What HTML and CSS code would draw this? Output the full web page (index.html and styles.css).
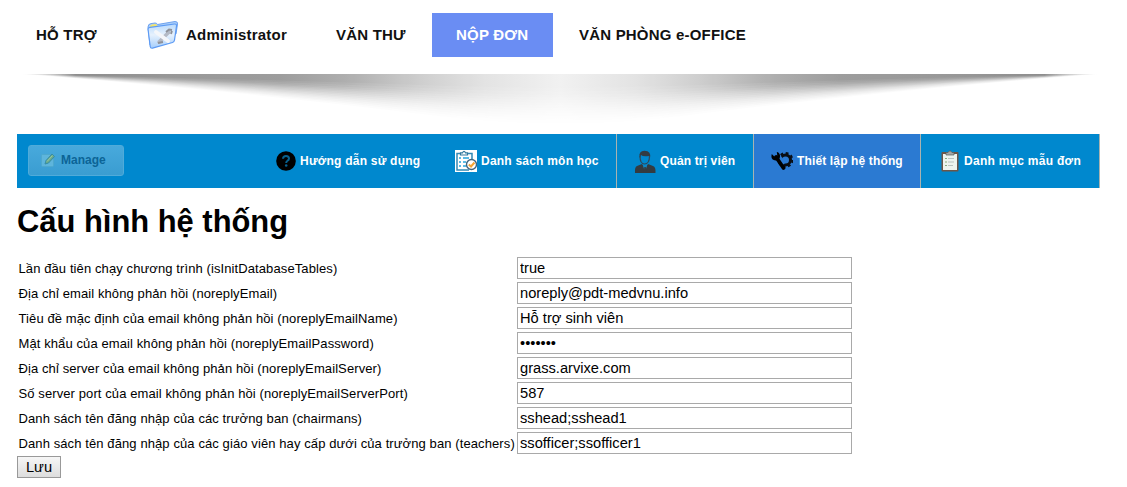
FILE: index.html
```
<!DOCTYPE html>
<html lang="vi">
<head>
<meta charset="utf-8">
<title>Cấu hình hệ thống</title>
<link rel="stylesheet" href="styles.css">
</head>
<body>
<nav class="top-nav">
  <a class="top-link support">HỖ TRỢ</a>
  <a class="top-link admin">
    <svg class="folder" width="34" height="30" viewBox="0 0 34 30">
      <defs><linearGradient id="fold" x1="0" y1="0" x2="0" y2="1"><stop offset="0" stop-color="#b9dafc"/><stop offset=".45" stop-color="#e6f1fd"/><stop offset="1" stop-color="#a4cdfb"/></linearGradient></defs>
      <path d="M2 7Q2 4 5 3.600L9 3Q11 3 11.500 4.500L29 1.500Q32 1.500 31.500 4L30 14L4 25Z" fill="#a9cefa" stroke="#6ea2ee"/>
      <path d="M4 6.500Q4 4.800 6 4.500L10 4L12 6.500L4 8Z" fill="#f2e46b"/>
      <path d="M2 9Q2 7.500 4 7.300L28.500 4Q30.800 3.800 30.500 6L28.500 20Q28.200 22 26.500 22.500L6.500 28.200Q4.500 28.500 4.200 26.500Z" fill="url(#fold)" stroke="#5c9af4" stroke-width="1.200"/>
      <path d="M13 22L23 12" stroke="#b4bac6" stroke-width="3.500" stroke-linecap="round"/>
      <path d="M10 12L22 21" stroke="#f4f6fa" stroke-width="4" stroke-linecap="round"/>
      <path d="M20 12L23 9.500L26 10M26 11L25 14M12 23L17 22" stroke="#8e9199" stroke-width="1.800" fill="none"/>
    </svg>
    <span>Administrator</span>
  </a>
  <a class="top-link mail">VĂN THƯ</a>
  <a class="top-link active">NỘP ĐƠN</a>
  <a class="top-link office">VĂN PHÒNG e-OFFICE</a>
</nav>
<svg class="shadow" width="1127" height="60" viewBox="0 0 1127 60">
  <defs>
    <linearGradient id="shade" gradientUnits="userSpaceOnUse" x1="22" y1="0" x2="1098" y2="0">
      <stop offset="0" stop-color="#aaa" stop-opacity="0"/><stop offset=".05" stop-color="#888"/><stop offset=".13" stop-color="#929292"/><stop offset=".24" stop-color="#999"/><stop offset=".3" stop-color="#aaa"/><stop offset=".37" stop-color="#ccc"/><stop offset=".43" stop-color="#e2e2e2"/><stop offset=".5" stop-color="#f0f0f0"/><stop offset=".57" stop-color="#e2e2e2"/><stop offset=".63" stop-color="#ccc"/><stop offset=".7" stop-color="#aaa"/><stop offset=".76" stop-color="#999"/><stop offset=".87" stop-color="#929292"/><stop offset=".95" stop-color="#888"/><stop offset="1" stop-color="#aaa" stop-opacity="0"/>
    </linearGradient>
    <path id="wedge" d="M22 0L50 .04Q250 .32 440 .74Q560 1 680 .74Q870 .32 1070 .04L1098 0Z"/>
    <mask id="fade" maskUnits="userSpaceOnUse" x="0" y="0" width="1127" height="60" style="mask-type:alpha">
      <use href="#wedge" transform="scale(1 57)" opacity=".04"/>
      <use href="#wedge" transform="scale(1 54)" opacity=".05"/>
      <use href="#wedge" transform="scale(1 51)" opacity=".06"/>
      <use href="#wedge" transform="scale(1 48)" opacity=".07"/>
      <use href="#wedge" transform="scale(1 45)" opacity=".08"/>
      <use href="#wedge" transform="scale(1 42)" opacity=".1"/>
      <use href="#wedge" transform="scale(1 39)" opacity=".12"/>
      <use href="#wedge" transform="scale(1 36)" opacity=".14"/>
      <use href="#wedge" transform="scale(1 33)" opacity=".16"/>
      <use href="#wedge" transform="scale(1 30)" opacity=".2"/>
      <use href="#wedge" transform="scale(1 27)" opacity=".25"/>
      <use href="#wedge" transform="scale(1 24)" opacity=".3"/>
      <use href="#wedge" transform="scale(1 20)" opacity=".4"/>
      <use href="#wedge" transform="scale(1 16)" opacity=".6"/>
    </mask>
  </defs>
  <path d="M22 0H1098V60H22Z" fill="url(#shade)" mask="url(#fade)"/>
</svg>
<div class="toolbar">
  <button class="manage" disabled>
    <svg width="16" height="16" viewBox="0 0 16 16"><rect x="1.500" y="2.500" width="12" height="12" rx="1" fill="#5eb5dc" stroke="#4da8ce"/><path d="M5 12L6 8.500L12 2L14.500 4.500L8.500 11Z" fill="#68a98c" stroke="#358da6"/><path d="M7 9.500L12.500 3.500" stroke="#9bc9a3"/></svg>
    <span>Manage</span>
  </button>
  <a class="tool guide">
    <svg width="20" height="20" viewBox="0 0 20 20"><circle cx="10" cy="10" r="9.800"/><path d="M7 7.700Q7.200 5 10 5Q13 5 13 7.500Q13 9 11.200 10Q10.200 10.600 10.200 12" fill="none" stroke="#07618f" stroke-width="2"/><circle cx="10.200" cy="14.500" r="1.300" fill="#07618f"/></svg>
    <span>Hướng dẫn sử dụng</span>
  </a>
  <a class="tool subjects">
    <svg width="22" height="22" viewBox="0 0 22 22"><path fill="#fff" d="M0 0H22V22H0Z"/><path d="M5 3.500H2V20H14M13 3.500H17V9" fill="none" stroke="#3389b5" stroke-width="1.500"/><path d="M5.500 5V2.800H7.500Q9 0 10.500 2.800H12.500V5Z" fill="#fff" stroke="#31789d" stroke-width="1.200"/><path d="M4 8H6M4 12H6M4 16H6M8 8H14M8 12H11M8 16H11" stroke="#27a4dc" stroke-width="1.700"/><circle cx="16.500" cy="14.500" r="5" fill="#fff" stroke="#41647d" stroke-width="1.400"/><path d="M13.800 14.500L16 16.500L19.500 12.500" fill="none" stroke="#f4a434" stroke-width="2"/></svg>
    <span>Danh sách môn học</span>
  </a>
  <a class="tool admins">
    <svg width="22" height="23" viewBox="0 0 22 23"><path d="M5.500 7Q4.500 1 10.500 .7Q17.500 1 16 8L15 6Q9 7 7 5L6 8Z" fill="#333c42"/><path d="M6 6Q6 14 10.500 14Q15.500 14 15.500 6" fill="none" stroke="#304a59" stroke-width="1.200"/><path d="M1 23Q.5 17 3 16L8 14L11 18L14 14L19 16Q22 17 21.500 23Z" fill="#343b40"/><path d="M8.500 14L11 22L13.500 14L11 17Z" fill="#168ac4"/><path d="M10.300 17H11.800L12.300 22H9.800Z" fill="#343b40"/></svg>
    <span>Quản trị viên</span>
  </a>
  <a class="tool settings">
    <svg width="22" height="20" viewBox="0 0 22 20"><circle cx="14.500" cy="9" r="5" fill="none" stroke="#090d13" stroke-width="3"/><circle cx="14.500" cy="9" r="6.900" fill="none" stroke="#090d13" stroke-width="2" stroke-dasharray="2.800 2.620"/><path d="M6 4L13 13" stroke="#2b7ad2" stroke-width="5"/><path d="M5 6L12.500 17" stroke="#000" stroke-width="3.800" stroke-linecap="round"/><path d="M.8 3Q-.8 9 4.500 9.500Q9.500 9 9 4.500Q8.300 1.200 5.800 1L6.300 4.500L3.800 6Z" fill="#000"/></svg>
    <span>Thiết lập hệ thống</span>
  </a>
  <a class="tool forms">
    <svg width="18" height="22" viewBox="0 0 18 22"><rect x=".5" y="2" width="17" height="19.500" rx="1" fill="#6c5548"/><path d="M2 4H16V20H2Z" fill="#edf4ef"/><path d="M5 5V2.500H7Q9 -1 11 2.500H13V5Z" fill="#a5a9a7" stroke="#555b5b" stroke-width=".7"/><path d="M4 8.500H6M4 12H6M4 15.500H6" stroke="#85aa7c"/><path d="M7 8.500H13M7 12H13M7 15.500H12" stroke="#b9c3c0"/></svg>
    <span>Danh mục mẫu đơn</span>
  </a>
</div>
<main class="content">
  <h1 class="title">Cấu hình hệ thống</h1>
  <form class="settings-form">
    <label class="row"><span class="label">Lần đầu tiên chạy chương trình (isInitDatabaseTables)</span><input class="field" value="true"></label>
    <label class="row"><span class="label">Địa chỉ email không phản hồi (noreplyEmail)</span><input class="field" value="noreply@pdt-medvnu.info"></label>
    <label class="row"><span class="label">Tiêu đề mặc định của email không phản hồi (noreplyEmailName)</span><input class="field" value="Hỗ trợ sinh viên"></label>
    <label class="row"><span class="label">Mật khẩu của email không phản hồi (noreplyEmailPassword)</span><input class="field" value="•••••••"></label>
    <label class="row"><span class="label">Địa chỉ server của email không phản hồi (noreplyEmailServer)</span><input class="field" value="grass.arvixe.com"></label>
    <label class="row"><span class="label">Số server port của email không phản hồi (noreplyEmailServerPort)</span><input class="field" value="587"></label>
    <label class="row"><span class="label">Danh sách tên đăng nhập của các trưởng ban (chairmans)</span><input class="field" value="sshead;sshead1"></label>
    <label class="row"><span class="label">Danh sách tên đăng nhập của các giáo viên hay cấp dưới của trưởng ban (teachers)</span><input class="field" value="ssofficer;ssofficer1"></label>
    <button class="save" type="button">Lưu</button>
  </form>
</main>
</body>
</html>
```
FILE: styles.css
```
* { box-sizing: border-box; }
body { margin: 0; background: #fff; color: #000; font-family: "Liberation Sans", Arial, sans-serif; overflow: hidden; }
svg { display: block; flex: none; }
.top-nav { display: flex; height: 74px; padding: 13px 0 0 12px; }
.top-link { display: flex; align-items: center; height: 44px; padding: 0 0 2px 24px; font-size: 15px; font-weight: bold; letter-spacing: .2px; color: #111; white-space: nowrap; }
.support { width: 110px; }
.admin { width: 190px; }
.folder { margin: 1px 6px 0 0; }
.mail { width: 120px; }
.active { width: 121px; background: #6a8df3; color: #fff; }
.office { padding-left: 26px; }
.shadow { height: 60px; }
.toolbar { display: flex; width: 1083px; height: 54px; margin-left: 17px; background: #0088ce; border-right: 1px solid #a9b3b0; }
.manage { display: flex; align-items: center; gap: 5px; width: 96px; height: 31px; margin: 11px 0 0 11px; padding: 0 0 2px 11px; border: 1px solid #50abd9; border-radius: 3px; background: linear-gradient(#48a9dc, #3a9dd1); color: #0c6496; font: bold 12px "Liberation Sans", Arial, sans-serif; }
.tool { display: flex; align-items: center; gap: 4px; color: #fff; font-size: 12px; font-weight: bold; letter-spacing: .22px; white-space: nowrap; }
.guide { width: 179px; margin-left: 152px; }
.subjects { width: 161px; }
.admins { width: 137px; padding-left: 17px; letter-spacing: .14px; border-left: 1px solid #a9b3b0; }
.settings { width: 167px; padding-left: 17px; letter-spacing: .14px; border-left: 1px solid #a9b3b0; background: #2b7ad2; }
.forms { width: 179px; padding-left: 20px; gap: 5px; letter-spacing: .28px; border-left: 1px solid #a9b3b0; }
.content { padding: 14px 0 0 17px; }
.title { margin: 0; height: 55px; font-size: 30.9px; line-height: 40px; }
.row { display: grid; grid-template-columns: 500px 335px; height: 25px; }
.label { padding-left: 1.5px; font-size: 13px; line-height: 23px; letter-spacing: .1px; white-space: nowrap; }
.field { width: 335px; height: 22px; padding: 0 2px 1px; border: 1px solid #a9a9a9; color: #000; font: 14.667px "Liberation Sans", Arial, sans-serif; }
.save { display: block; width: 44px; height: 22px; margin-top: -1px; padding: 0 0 1px; border: 1px solid #999; background: linear-gradient(#f6f6f6, #ddd); color: #000; font: 14.667px "Liberation Sans", Arial, sans-serif; }
```
